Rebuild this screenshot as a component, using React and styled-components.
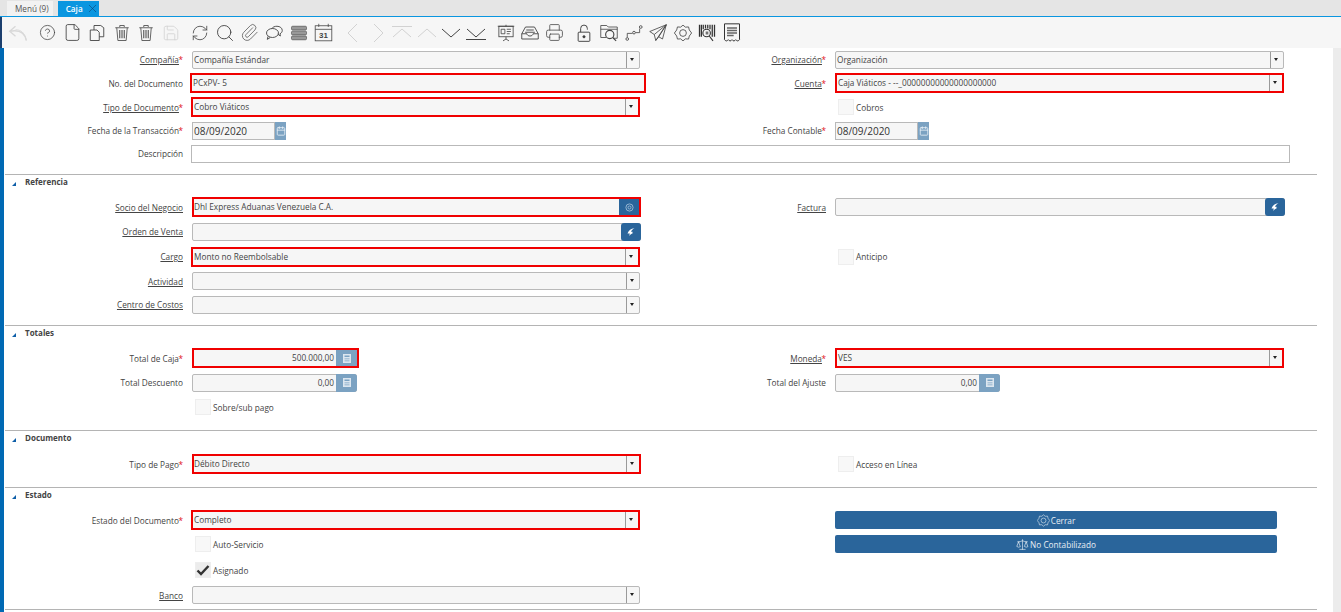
import React from 'react';
import styled, { createGlobalStyle } from 'styled-components';
import { CircleHelp, File, Save, RefreshCw, Search, Paperclip, Printer, X, Scale, Calendar } from 'lucide-react';

const GlobalStyle = createGlobalStyle`
  html, body { margin: 0; padding: 0; height: 100%; overflow: hidden; background: #fff; }
  body { font-family: "Open Sans", "Noto Sans", sans-serif; font-size: 8.25px; color: #333; }
`;

const FADED = '#d2d2d2';
const DARK = '#444';

const Svg = ({ size, children, color = DARK, sw = 1 }) => (
  <svg width={size} height={size} viewBox="0 0 24 24" fill="none" stroke={color} strokeWidth={sw}>
    {children}
  </svg>
);

const UndoIcon = () => (
  <Svg size={20} color="#d8d8d8" sw={1.6}>
    <path d="M9 4 2 10l7 6M2 10c10-2 18 1 20 11" />
    <path d="M9 8c6 0 11 3 13 13" strokeWidth="1" />
  </Svg>
);
const CopyIcon = () => (
  <Svg size={18} sw={1.2}>
    <path d="M3 8h9l3 3v11H3z" />
    <path d="M8 8V2h9l4 3v12h-6" />
  </Svg>
);
const TrashIcon = () => (
  <Svg size={18} color="#555" sw={1.2}>
    <path d="M3 5h18M9 4V2h6v2M5 5l1.500 17h11L19 5" />
    <path d="M9 8v11M12 8v11M15 8v11" strokeWidth="1.500" />
  </Svg>
);
const ChatIcon = () => (
  <Svg size={18} sw={1.2}>
    <path d="M9 6.500C10 4 13 3 16 3c4 0 7 2.500 7 5.500 0 2-1 3.500-3 4.500l.5 3-3.500-2.500" />
    <path d="M4 16.500 3 20.500l4-2.500" />
    <ellipse cx="10" cy="12" rx="8" ry="6" />
  </Svg>
);
const StackIcon = () => (
  <Svg size={18} color="#555" sw={1}>
    <rect x="2" y="3" width="20" height="5" rx="1.500" fill="#999" />
    <rect x="2" y="9.500" width="20" height="5" rx="1.500" fill="#999" />
    <rect x="2" y="16" width="20" height="5" rx="1.500" fill="#999" />
  </Svg>
);
const CalendarIcon = () => (
  <Svg size={19} sw={1}>
    <rect x="1.500" y="3.500" width="21" height="19" />
    <path d="M1.500 8h21M6 1v4M18 1v4" />
    <CalText x="12" y="19.500" textAnchor="middle">31</CalText>
  </Svg>
);
const Chevron = ({ dir, faded, bar }) => {
  const color = faded ? FADED : DARK;
  const paths = {
    left: 'M16 3 7 12l9 9',
    right: 'M8 3l9 9-9 9',
    up: 'M3 16l9-8 9 8',
    down: 'M3 8l9 8 9-8',
  };
  return (
    <Svg size={24} color={color} sw={1}>
      <path d={paths[dir]} />
      {bar === 'top' && <path d="M2 5.500h20" />}
      {bar === 'bottom' && <path d="M2 18.500h20" />}
    </Svg>
  );
};
const BoardIcon = () => (
  <Svg size={18} sw={1.1}>
    <rect x="2.500" y="3" width="19" height="14" />
    <path d="M1 3h22M12 1v2M12 17v3M8 22.500l4-2.500 4 2.500" />
    <path d="M5.500 7h5v6h-5zM13 7h5.500M13 10h5.500M13 13h4" />
  </Svg>
);
const TrayIcon = () => (
  <Svg size={18} sw={1.2}>
    <path d="M1 13 6 4h12l5 9v7H1zM1 13h7c0 2 2 3 4 3s4-1 4-3h7M7 8h10M5.500 11h13" />
  </Svg>
);
const LockIcon = () => (
  <Svg size={20} color="#3a3a3a" sw={1.1}>
    <rect x="5" y="11" width="14" height="11" rx="1" />
    <path d="M8 11V6.500a4 4 0 0 1 8 0V8" />
    <circle cx="12" cy="16.500" r="1.300" fill="#3a3a3a" />
  </Svg>
);
const FolderSearchIcon = () => (
  <Svg size={18} sw={1.1}>
    <path d="M1 18V2h8l2 2h12v15h-5" />
    <path d="M1 18h7M1 7h22" />
    <circle cx="13" cy="14" r="5.500" strokeWidth="1.500" />
    <path d="m17 18 4.500 4.500" strokeWidth="1.500" />
  </Svg>
);
const FlowIcon = () => (
  <Svg size={18} sw={1.1}>
    <circle cx="3" cy="20" r="1.800" /><circle cx="12" cy="11.500" r="1.800" /><circle cx="21" cy="4" r="1.800" />
    <path d="M3 18v-5.500h7M14 11.500h5.500V6" />
  </Svg>
);
const PlaneIcon = () => (
  <Svg size={18} sw={1.1}>
    <path d="M23 1 1 10l6 4 2 8 4-5 5 3zM23 1 7 14M23 1 9 22M23 1 13 17" />
  </Svg>
);
const GearIcon = ({ size = 18, color = DARK }) => (
  <Svg size={size} color={color} sw={1.100}>
    <path d="M12 1.500l3.200 2.700 4.200-.300 1 4.100 3.100 4-3.100 4-1 4.100-4.200-.300-3.200 2.700-3.200-2.700-4.200.300-1-4.100-3.100-4 3.100-4 1-4.100 4.200.300z" />
    <circle cx="12" cy="12" r="4.500" />
  </Svg>
);
const BarcodeIcon = () => (
  <Svg size={18} color="#333" sw={1.700}>
    <path d="M2 1v16M4.500 1v16M7 1v6M10 1v5M13 1v5M16 1v6M19 1v16M22 1v16" />
    <circle cx="11.500" cy="12" r="5" strokeWidth="1.500" />
    <path d="M11 10v4M13 10v4" strokeWidth="1.200" />
    <path d="m15 16 5 6.500" strokeWidth="1.500" />
  </Svg>
);
const ReceiptIcon = () => (
  <Svg size={20} color="#333" sw={1.200}>
    <path d="M3 1h18v19c-1.500 2-3 2-4.500 0-1.500 2-3 2-4.500 0-1.500 2-3 2-4.500 0-1.500 2-3 2-4.500 0z" />
    <path d="M6 6h12M6 9h12M6 12h12M6 15h8" strokeWidth="1.700" stroke="#666" />
  </Svg>
);
const ZoomArrow = () => (
  <svg width="10" height="10" viewBox="0 0 10 10" fill="#fff">
    <path d="M8.500 1C5 1.500 2.500 3.500 1.500 6.500h2.300L3.200 9c1.200-1.500 2.300-2.300 3.300-2.500V4.800H4.900C5.500 3.300 7 1.900 8.500 1z" />
  </svg>
);
const AtIcon = () => (
  <svg width="9" height="9" viewBox="0 0 10 10" fill="none" stroke="#9fbcd6" strokeWidth="1">
    <circle cx="5" cy="5" r="4" />
    <circle cx="5" cy="5" r="1.700" />
  </svg>
);
const CalcIcon = () => (
  <svg width="8" height="9" viewBox="0 0 8 9" fill="#dce6ef">
    <path d="M0 0h8v9H0zM1.500 1.500v1.500h5V1.500zM1.500 4.500V5.300h5V4.500zM1.500 6.500v.8h5v-.8z" fillRule="evenodd" />
  </svg>
);

const lucide = (Icon, size, color = DARK) => () => <Icon size={size} strokeWidth={1.1} color={color} />;

const toolbarGroups = [
  [UndoIcon],
  [lucide(CircleHelp, 17), lucide(File, 19), CopyIcon, TrashIcon, TrashIcon, lucide(Save, 18, FADED)],
  [lucide(RefreshCw, 18), lucide(Search, 20), lucide(Paperclip, 19, '#666'), ChatIcon, StackIcon, CalendarIcon],
  [
    () => <Chevron dir="left" faded />,
    () => <Chevron dir="right" faded />,
    () => <Chevron dir="up" faded bar="top" />,
    () => <Chevron dir="up" faded />,
    () => <Chevron dir="down" />,
    () => <Chevron dir="down" bar="bottom" />,
  ],
  [BoardIcon, TrayIcon, lucide(Printer, 19, '#555')],
  [LockIcon, FolderSearchIcon, FlowIcon, PlaneIcon, GearIcon, BarcodeIcon, ReceiptIcon],
];

function Field({ label, link, req, kind = 'text', value, red, end, w, shift = -1, pad = 1 }) {
  return (
    <FieldCell>
      <Label>
        <LabelText $link={link}>{label}</LabelText>
        {req && <Star>*</Star>}
      </Label>
      <Control $red={red} $w={w || (red ? 449 : 448)} $shift={red ? shift : 0}>
        <Input $align={kind === 'amount' ? 'right' : 'left'} $pad={pad}>{value}</Input>
        {kind === 'select' && <Arrow />}
        {kind === 'search' && <SideBtn $round={!red}>{end === 'at' ? <AtIcon /> : <ZoomArrow />}</SideBtn>}
        {kind === 'amount' && <CalcBtn $round={!red}><CalcIcon /></CalcBtn>}
      </Control>
    </FieldCell>
  );
}

function Check({ label, checked }) {
  return (
    <CheckWrap>
      <Box $on={checked}>
        {checked && (
          <svg width="14" height="14" viewBox="0 0 14 14" fill="none" stroke="#333" strokeWidth="2.400">
            <path d="M1.500 7.500 5 11l7.500-8" />
          </svg>
        )}
      </Box>
      <span>{label}</span>
    </CheckWrap>
  );
}

function DateField({ label, value }) {
  return (
    <FieldCell>
      <Label><LabelText>{label}</LabelText><Star>*</Star></Label>
      <DateWrap>
        <DateInput>{value}</DateInput>
        <DateBtn><Calendar size={10} color="#e6eef5" /></DateBtn>
      </DateWrap>
    </FieldCell>
  );
}

export default function App() {
  return (
    <Page>
      <GlobalStyle />
      <Tabs>
        <Tab>Menú (9)</Tab>
        <Tab $active>Caja <X size={13} strokeWidth={1} color="#0b3a66" /></Tab>
      </Tabs>
      <Toolbar>
        {toolbarGroups.map((group, i) => (
          <Group key={i}>
            {group.map((Icon, j) => (
              <ToolBtn key={j}><Icon /></ToolBtn>
            ))}
          </Group>
        ))}
      </Toolbar>
      <Body>
        <Form>
          <Section>
            <Row $h={23}>
              <Field label="Compañía" link req kind="select" value="Compañía Estándar" />
              <Field label="Organización" link req kind="select" value="Organización" w={449} />
            </Row>
            <Row $h={24}>
              <Field label="No. del Documento" value="PCxPV- 5" red w={456} shift={-2} />
              <Field label="Cuenta" link req kind="select" value="Caja Viáticos - --_00000000000000000000" red shift={0} />
            </Row>
            <Row $h={24}>
              <Field label="Tipo de Documento" link req kind="select" value="Cobro Viáticos" red />
              <CheckCell><Check label="Cobros" /></CheckCell>
            </Row>
            <Row $h={23}>
              <DateField label="Fecha de la Transacción" value="08/09/2020" />
              <DateField label="Fecha Contable" value="08/09/2020" />
            </Row>
            <WideRow>
              <Label><LabelText>Descripción</LabelText></Label>
              <WideInput />
            </WideRow>
          </Section>

          <Section>
            <Heading>Referencia</Heading>
            <Row $h={24}>
              <Field label="Socio del Negocio" link kind="search" end="at" value="Dhl Express Aduanas Venezuela C.A." red shift={0} pad={0} />
              <Field label="Factura" link kind="search" w={450} />
            </Row>
            <Row $h={25}>
              <Field label="Orden de Venta" link kind="search" w={449} />
            </Row>
            <Row $h={25}>
              <Field label="Cargo" link kind="select" value="Monto no Reembolsable" red />
              <CheckCell><Check label="Anticipo" /></CheckCell>
            </Row>
            <Row $h={24}>
              <Field label="Actividad" link kind="select" />
            </Row>
            <Row $h={23}>
              <Field label="Centro de Costos" link kind="select" />
            </Row>
          </Section>

          <Section $pb={11}>
            <Heading>Totales</Heading>
            <Row $h={24}>
              <Field label="Total de Caja" req kind="amount" value="500.000,00" red w={167} shift={0} />
              <Field label="Moneda" link req kind="select" value="VES" red shift={0} />
            </Row>
            <Row $h={25}>
              <Field label="Total Descuento" kind="amount" value="0,00" w={165} />
              <Field label="Total del Ajuste" kind="amount" value="0,00" w={165} />
            </Row>
            <Row $h={24}>
              <CheckCell><Check label="Sobre/sub pago" /></CheckCell>
            </Row>
          </Section>

          <Section $pb={10}>
            <Heading>Documento</Heading>
            <Row $h={26}>
              <Field label="Tipo de Pago" req kind="select" value="Débito Directo" red shift={0} pad={0} />
              <CheckCell><Check label="Acceso en Línea" /></CheckCell>
            </Row>
          </Section>

          <Section $pb={3}>
            <Heading>Estado</Heading>
            <Row $h={24}>
              <Field label="Estado del Documento" req kind="select" value="Completo" red />
              <ActionCell><Action><GearIcon size={13} color="#e8eef4" />Cerrar</Action></ActionCell>
            </Row>
            <Row $h={24}>
              <CheckCell><Check label="Auto-Servicio" /></CheckCell>
              <ActionCell><Action><Scale size={13} strokeWidth={1.2} />No Contabilizado</Action></ActionCell>
            </Row>
            <Row $h={28}>
              <CheckCell><Check label="Asignado" checked /></CheckCell>
            </Row>
            <Row $h={22}>
              <Field label="Banco" link kind="select" />
            </Row>
          </Section>
        </Form>
        <Scrollbar />
      </Body>
    </Page>
  );
}

const Page = styled.div`
  width: 1341px;
  height: 612px;
  display: flex;
  flex-direction: column;
  overflow: hidden;
`;

const CalText = styled.text`
  font-family: "Liberation Sans", sans-serif;
  font-size: 10px;
  font-weight: 700;
  fill: #444;
  stroke: none;
`;

const Tabs = styled.div`
  height: 16px;
  display: flex;
  align-items: flex-end;
  gap: 5px;
  padding-left: 7px;
  background: #e5e5e5;
  border-bottom: 1px solid #0a96e0;
  flex: none;
`;

const Tab = styled.div`
  height: 15px;
  padding: ${p => (p.$active ? '0 0 0 8px' : '0 4px 0 8px')};
  display: flex;
  align-items: center;
  gap: 3px;
  font-size: 8.2px;
  color: ${p => (p.$active ? '#fff' : '#555')};
  font-weight: ${p => (p.$active ? 600 : 400)};
  background: ${p => (p.$active ? '#0a96e0' : '#f2f2f2')};
`;

const Toolbar = styled.div`
  height: 31px;
  flex: none;
  box-sizing: border-box;
  display: flex;
  align-items: center;
  gap: 5px;
  padding-left: 4px;
  border-left: 2px solid #1c3f6e;
  background: #f6f6f6;
`;

const Group = styled.div`
  display: flex;
`;

const ToolBtn = styled.div`
  width: 24.6px;
  height: 24px;
  display: flex;
  align-items: center;
  justify-content: center;
`;

const Body = styled.div`
  flex: 1;
  min-height: 0;
  display: flex;
  border-left: 4px solid #0069b4;
`;

const Form = styled.div`
  width: 1329px;
  flex: none;
  display: flex;
  flex-direction: column;
`;

const Scrollbar = styled.div`
  width: 8px;
  background: #ececec;
`;

const Section = styled.section`
  margin: 0 16px 0 1px;
  padding-bottom: ${p => p.$pb ?? 9}px;
  border-bottom: 1px solid #b4b4b4;
`;

const Heading = styled.h3`
  margin: 0 0 7px;
  padding: 1px 0 0 20px;
  height: 12px;
  line-height: 12px;
  font-size: 8px;
  font-weight: 700;
  color: #444;
  position: relative;
  &::before {
    content: '';
    position: absolute;
    left: 7px;
    top: 7px;
    border-style: solid;
    border-width: 0 0 4px 4px;
    border-color: transparent transparent #0e5ea8 transparent;
  }
`;

const Row = styled.div`
  height: ${p => p.$h}px;
  display: grid;
  grid-template-columns: 643px 643px;
  align-items: center;
`;

const WideRow = styled.div`
  height: 23px;
  display: flex;
  align-items: center;
`;

const FieldCell = styled.div`
  display: flex;
  align-items: center;
`;

const Label = styled.div`
  width: 180px;
  flex: none;
  padding-right: 2px;
  box-sizing: border-box;
  text-align: right;
  white-space: nowrap;
  margin-right: 7px;
`;

const LabelText = styled.span`
  color: #444;
  text-decoration: ${p => (p.$link ? 'underline' : 'none')};
`;

const Star = styled.span`
  color: #e0101a;
  margin-left: -0.5px;
`;

const Control = styled.div`
  width: ${p => p.$w}px;
  height: ${p => (p.$red ? 20 : 18)}px;
  box-sizing: border-box;
  display: flex;
  flex: none;
  background: #f6f6f6;
  border: ${p => (p.$red ? '2px solid #f00000' : '1px solid #b9b9b9')};
  border-radius: ${p => (p.$red ? 0 : 2)}px;
  margin-left: ${p => p.$shift}px;
`;

const Input = styled.div`
  flex: 1;
  min-width: 0;
  padding: 0 2px 0 ${p => p.$pad}px;
  line-height: 16px;
  color: #444;
  text-align: ${p => p.$align};
  white-space: nowrap;
  overflow: hidden;
`;

const Arrow = styled.div`
  width: 12px;
  flex: none;
  border-left: 1px solid #9a9a9a;
  position: relative;
  &::after {
    content: '';
    position: absolute;
    left: 3px;
    top: 6px;
    border-style: solid;
    border-width: 3px 2.5px 0;
    border-color: #222 transparent transparent;
  }
`;

const SideBtn = styled.div`
  width: 20px;
  margin: ${p => (p.$round ? '-1px' : '0')};
  flex: none;
  background: #2a659b;
  border-radius: ${p => (p.$round ? 3 : 0)}px;
  display: flex;
  align-items: center;
  justify-content: center;
`;

const CalcBtn = styled.div`
  width: 21px;
  margin: ${p => (p.$round ? '-1px -1px -1px 0' : '0')};
  flex: none;
  background: #7ba2c2;
  border-radius: ${p => (p.$round ? '0 3px 3px 0' : '0')};
  display: flex;
  align-items: center;
  justify-content: center;
`;

const CheckCell = styled.div`
  padding-left: 190px;
`;

const CheckWrap = styled.div`
  display: flex;
  align-items: center;
  gap: 2px;
  color: #444;
`;

const Box = styled.div`
  width: 16px;
  height: 16px;
  display: flex;
  align-items: center;
  justify-content: center;
  background: ${p => (p.$on ? '#ececec' : '#f8f8f8')};
  border: 1px solid #eee;
  box-sizing: border-box;
`;

const DateWrap = styled.div`
  display: flex;
  height: 18px;
`;

const DateInput = styled.div`
  width: 83px;
  box-sizing: border-box;
  padding-left: 1px;
  line-height: 16px;
  font-size: 10px;
  color: #333;
  background: #f6f6f6;
  border: 1px solid #b9b9b9;
`;

const DateBtn = styled.div`
  width: 11px;
  background: #7ba2c2;
  display: flex;
  align-items: center;
  justify-content: center;
`;

const WideInput = styled.div`
  width: 1099px;
  height: 18px;
  flex: none;
  margin-left: -1px;
  box-sizing: border-box;
  border: 1px solid #b9b9b9;
  background: #fff;
`;

const ActionCell = styled.div`
  padding-left: 187px;
`;

const Action = styled.div`
  width: 442px;
  height: 18px;
  border-radius: 2px;
  background: #2a659b;
  color: #e8eef4;
  display: flex;
  align-items: center;
  justify-content: center;
  gap: 1px;
`;
